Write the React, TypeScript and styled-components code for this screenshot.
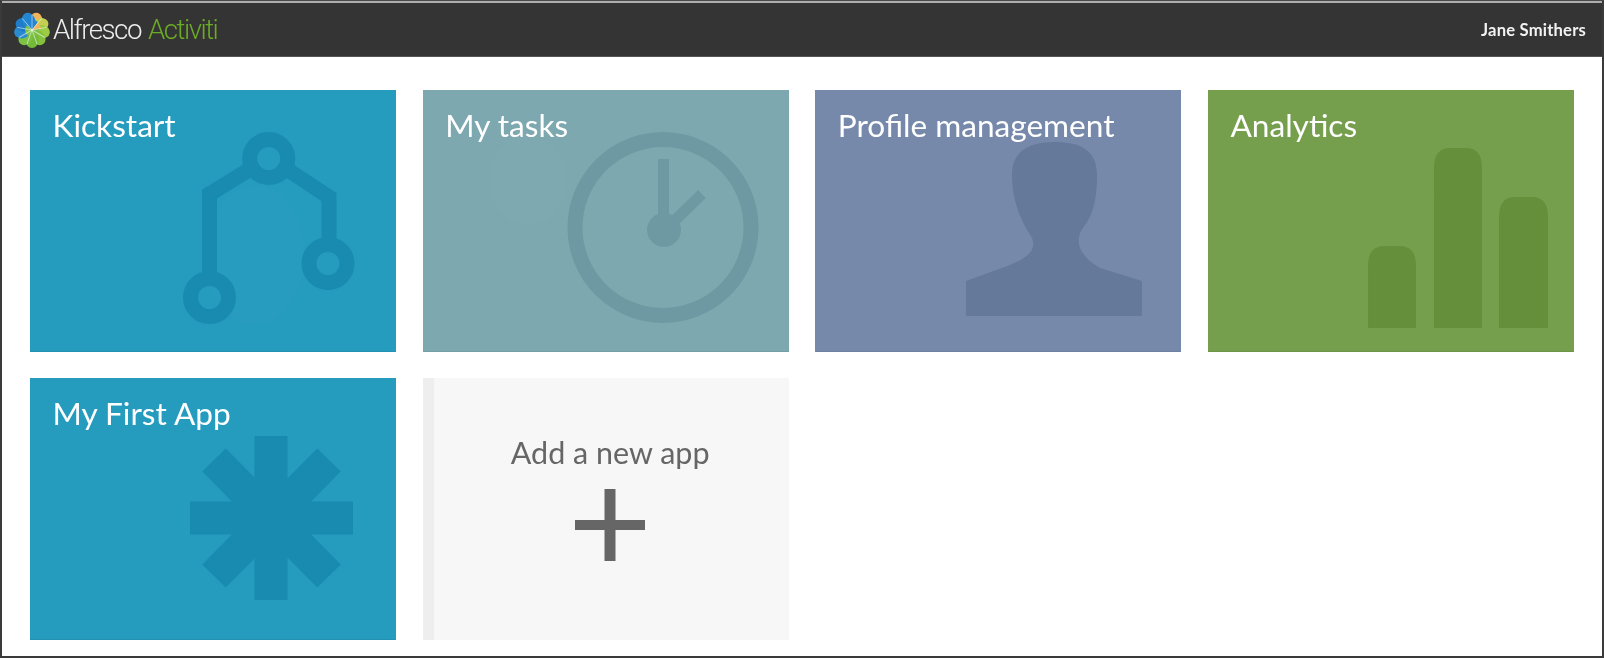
import React from 'react';
import styled, { createGlobalStyle } from 'styled-components';

const GlobalStyle = createGlobalStyle`
  html, body {
    margin: 0;
    padding: 0;
    background: #ffffff;
  }
`;

const Frame = styled.div`
  box-sizing: border-box;
  width: 1604px;
  height: 658px;
  display: flex;
  flex-direction: column;
  overflow: hidden;
  background: #ffffff;
  border: 2px solid #3a3a3a;
  border-top: 1px solid #4a4a4a;
  font-family: Lato, "Open Sans", sans-serif;
`;

const TopBar = styled.header`
  box-sizing: border-box;
  height: 56px;
  flex: none;
  display: flex;
  align-items: center;
  justify-content: space-between;
  padding: 1px 16px 0 12px;
  background: #343434;
  border-top: 2px solid #aeaeae;
  border-bottom: 1px solid #555555;
`;

const Brand = styled.div`
  display: flex;
  align-items: center;
  gap: 3px;
  filter: blur(0.5px);
`;

const BrandText = styled.span<{ $accent?: boolean }>`
  font-family: Roboto, "Liberation Sans", sans-serif;
  font-weight: 300;
  font-size: 27.7px;
  letter-spacing: -1.5px;
  line-height: 30px;
  color: ${props => (props.$accent ? '#6cab25' : '#ececec')};
  margin-left: ${props => (props.$accent ? '4px' : '0')};
`;

const UserName = styled.span`
  font-family: Lato, sans-serif;
  font-weight: 700;
  font-size: 16.6px;
  letter-spacing: 0.2px;
  color: #f2f2f2;
  filter: blur(0.4px);
`;

const Grid = styled.main`
  display: grid;
  grid-template-columns: repeat(4, 1fr);
  grid-auto-rows: 262px;
  gap: 26px 26.67px;
  padding: 33px 28px 0;
`;

const Tile = styled.div<{ $bg: string }>`
  position: relative;
  overflow: hidden;
  box-sizing: border-box;
  padding: 13px 22.5px;
  background: ${props => props.$bg};
  box-shadow: inset 0 -1px 0 rgba(0, 0, 0, 0.06);
`;

const TileTitle = styled.h2`
  position: relative;
  margin: 0;
  font-weight: 400;
  font-size: 31.6px;
  line-height: 44px;
  color: #ffffff;
  filter: blur(0.4px);
`;

const Watermark = styled.svg`
  position: absolute;
  inset: 0;
  width: 100%;
  height: 100%;
`;

const AddTile = styled.div`
  box-sizing: border-box;
  display: flex;
  flex-direction: column;
  align-items: center;
  padding: 52px 2px 0 0;
  background: #f7f7f7;
  border-left: 11px solid #eeeeee;
`;

const AddLabel = styled.div`
  font-size: 30.5px;
  line-height: 44px;
  color: #666666;
  filter: blur(0.4px);
`;

const PlusIcon = styled.svg`
  margin-top: 15px;
  width: 70px;
  height: 72px;
`;

const LogoMark = styled.svg`
  width: 36px;
  height: 38px;
  filter: blur(0.4px);
`;

const PETALS = [
  { a: 20, c: '#f2b45a' },
  { a: 60, c: '#c4cf52' },
  { a: 100, c: '#9ccb45' },
  { a: 140, c: '#84c23e' },
  { a: 180, c: '#74ba3a' },
  { a: 220, c: '#7cc044' },
  { a: 260, c: '#2a8ad0' },
  { a: 300, c: '#1f7cc9' },
  { a: 340, c: '#2386d2' },
];

const LogoFlower: React.FC = () => (
  <LogoMark viewBox="-18 -19 36 38">
    {PETALS.map(p => (
      <ellipse key={p.a} cx="0" cy="-10" rx="6.6" ry="8" fill={p.c} transform={`rotate(${p.a})`} />
    ))}
    <circle r="7" fill="#7cc044" />
    <path d="M-7 -7A10 10 0 0 1 6 -8L0 0Z" fill="#2386d2" />
    <path d="M0 0L6 -8L9 -2Z" fill="#f2b45a" />
    {PETALS.map(p => (
      <path key={p.a} d="M0 0V-15" stroke="#ffffff" strokeOpacity="0.55" strokeWidth="0.9" transform={`rotate(${p.a + 20})`} />
    ))}
  </LogoMark>
);

const BranchMark: React.FC = () => (
  <Watermark viewBox="0 0 366 262">
    <ellipse cx="225" cy="165" rx="50" ry="70" fill="#ffffff" opacity="0.012" />
    <g fill="none" stroke="#1a8bb0" strokeWidth="15">
      <path d="M179.500 185V104L222 78M255 78L299 107V160" />
      <circle cx="238.700" cy="68.500" r="19" />
      <circle cx="179.500" cy="207.500" r="19" />
      <circle cx="298" cy="173.500" r="19" />
    </g>
  </Watermark>
);

const ClockMark: React.FC = () => (
  <Watermark viewBox="0 0 366 262">
    <ellipse cx="105" cy="90" rx="40" ry="45" fill="#ffffff" opacity="0.012" />
    <g fill="none" stroke="#6e99a2">
      <circle cx="240" cy="137.500" r="88" strokeWidth="15" />
      <path d="M240.500 69V140" strokeWidth="11" />
      <path d="M244 138L279 104" strokeWidth="11" />
    </g>
    <circle cx="241" cy="140" r="17" fill="#6e99a2" />
  </Watermark>
);

const PersonMark: React.FC = () => (
  <Watermark viewBox="0 0 366 262">
    <path
      fill="#65799a"
      d="M151 226V191L195 175C212 168 222 160 217 148C205 130 197 110 197 85C197 60 215 52 240 52C265 52 282 60 282 85C282 110 278 125 268 138C262 146 258 162 285 178L327 191V226Z"
    />
  </Watermark>
);

const BarsMark: React.FC = () => (
  <Watermark viewBox="0 0 366 262">
    <path
      fill="#658f3b"
      d="M160 238V176Q160 156 176 156H192Q208 156 208 176V238ZM226 238V78Q226 58 242 58H258Q274 58 274 78V238ZM291 238V127Q291 107 307 107H324Q340 107 340 127V238Z"
    />
  </Watermark>
);

const AsteriskMark: React.FC = () => (
  <Watermark viewBox="0 0 366 262">
    <path
      stroke="#1a8bb0"
      strokeWidth="33"
      fill="none"
      d="M241 58V222M160 140H323M184 82L299 198M299 82L184 198"
    />
  </Watermark>
);

const TILES = [
  { title: 'Kickstart', bg: '#259bbe', mark: <BranchMark /> },
  { title: 'My tasks', bg: '#7da8b0', mark: <ClockMark /> },
  { title: 'Profile management', bg: '#7689ab', mark: <PersonMark /> },
  { title: 'Analytics', bg: '#769f4d', mark: <BarsMark /> },
  { title: 'My First App', bg: '#259bbe', mark: <AsteriskMark /> },
];

const App: React.FC = () => (
  <>
    <GlobalStyle />
    <Frame>
      <TopBar>
        <Brand>
          <LogoFlower />
          <BrandText>Alfresco</BrandText>
          <BrandText $accent>Activiti</BrandText>
        </Brand>
        <UserName>Jane Smithers</UserName>
      </TopBar>
      <Grid>
        {TILES.map(tile => (
          <Tile key={tile.title} $bg={tile.bg}>
            {tile.mark}
            <TileTitle>{tile.title}</TileTitle>
          </Tile>
        ))}
        <AddTile>
          <AddLabel>Add a new app</AddLabel>
          <PlusIcon viewBox="0 0 70 72">
            <path d="M35 0V72" stroke="#666666" strokeWidth="11" fill="none" />
            <path d="M0 36H70" stroke="#666666" strokeWidth="10" fill="none" />
          </PlusIcon>
        </AddTile>
      </Grid>
    </Frame>
  </>
);

export default App;
